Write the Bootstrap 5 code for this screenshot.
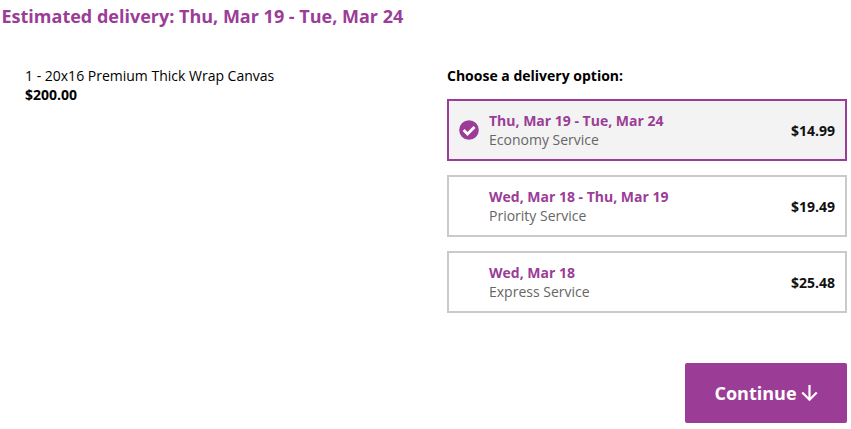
<!DOCTYPE html>
<html lang="en">
<head>
<meta charset="utf-8">
<title>Delivery options</title>
<link href="https://cdn.jsdelivr.net/npm/bootstrap@5.3.0/dist/css/bootstrap.min.css" rel="stylesheet">
<style>
body{font-family:"Open Sans",sans-serif;font-size:14px;line-height:19px;color:#000;background:#fff;overflow:hidden}
.headline{font-size:18px;line-height:25px;color:#9b3d97;padding:4px 0 0 1.5px}
.content-row{padding:37px 4px 0 25px}
.choices{width:400px}
.choices h2{font-size:14px;line-height:19px;margin-bottom:14px}
.option{height:62px;border:2px solid #cacaca;padding:0 10px;background:#fff;color:#111;margin-bottom:14px;cursor:pointer}
.option.chosen{border-color:#9b3d97;background:#f3f3f3}
.tick{width:20px;height:20px;margin-right:10px}
.option.chosen .tick{margin-top:-1px}
.when{color:#9b3d97}
.service{color:#666}
.go{width:162px;height:60px;margin-top:36px;background:#9b3d97;border-radius:2px;font-size:18px}
</style>
</head>
<body>
<main>
<h1 class="headline fw-bold mb-0">Estimated delivery: Thu, Mar 19 - Tue, Mar 24</h1>
<div class="content-row d-flex justify-content-between">
<section><div>1 - 20x16 Premium Thick Wrap Canvas</div><div class="fw-bold">$200.00</div></section>
<section class="choices d-flex flex-column">
<h2 class="fw-bold">Choose a delivery option:</h2>
<div class="option chosen d-flex align-items-center">
<svg class="tick" viewBox="0 0 20 20"><circle cx="10" cy="10" r="9.8" fill="#9b3d97"/><path d="M4.6 10l3.9 3.9 7-7" fill="none" stroke="#fff" stroke-width="2.8"/></svg>
<div class="flex-grow-1"><div class="when fw-bold">Thu, Mar 19 - Tue, Mar 24</div><div class="service">Economy Service</div></div><span class="fw-bold">$14.99</span></div>
<div class="option d-flex align-items-center"><span class="tick"></span>
<div class="flex-grow-1"><div class="when fw-bold">Wed, Mar 18 - Thu, Mar 19</div><div class="service">Priority Service</div></div><span class="fw-bold">$19.49</span></div>
<div class="option d-flex align-items-center"><span class="tick"></span>
<div class="flex-grow-1"><div class="when fw-bold">Wed, Mar 18</div><div class="service">Express Service</div></div><span class="fw-bold">$25.48</span></div>
<button type="button" class="go btn text-white fw-bold border-0 p-0 d-flex align-items-center justify-content-center align-self-end gap-1">Continue<svg width="17" height="18" viewBox="0 0 17 18" fill="none" stroke="#fff" stroke-width="2.2"><path d="M8.5 1v14.5M1.2 8.5l7.3 7.2 7.3-7.2"/></svg></button>
</section>
</div>
</main>
<script src="https://cdn.jsdelivr.net/npm/bootstrap@5.3.0/dist/js/bootstrap.bundle.min.js"></script>
</body>
</html>
